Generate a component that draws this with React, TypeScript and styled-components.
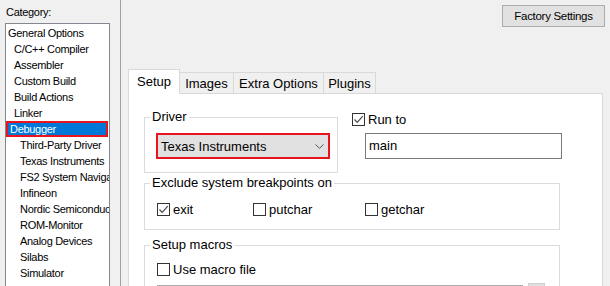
import React from 'react';
import styled, { createGlobalStyle } from 'styled-components';

const categories = [
  { label: 'General Options', level: 0 },
  { label: 'C/C++ Compiler', level: 1 },
  { label: 'Assembler', level: 1 },
  { label: 'Custom Build', level: 1 },
  { label: 'Build Actions', level: 1 },
  { label: 'Linker', level: 1 },
  { label: 'Debugger', level: 1, selected: true },
  { label: 'Third-Party Driver', level: 2 },
  { label: 'Texas Instruments', level: 2 },
  { label: 'FS2 System Navigator', level: 2 },
  { label: 'Infineon', level: 2 },
  { label: 'Nordic Semiconductor', level: 2 },
  { label: 'ROM-Monitor', level: 2 },
  { label: 'Analog Devices', level: 2 },
  { label: 'Silabs', level: 2 },
  { label: 'Simulator', level: 2 },
];

const tabs = [
  { label: 'Setup', width: 52, active: true },
  { label: 'Images', width: 55 },
  { label: 'Extra Options', width: 91 },
  { label: 'Plugins', width: 53 },
];

const CheckMark = () => (
  <svg width="11" height="11" viewBox="0 0 11 11" fill="none">
    <polyline points="1.5,5.5 4.2,8.3 9.8,2.2" stroke="#4a4a4a" strokeWidth="1.2" />
  </svg>
);

const CheckBox = ({ checked, label }: { checked?: boolean; label: string }) => (
  <CheckItem>
    <Box>{checked ? <CheckMark /> : null}</Box>
    <span>{label}</span>
  </CheckItem>
);

const App = () => {
  return (
    <Window>
      <GlobalStyle />
      <Sidebar>
        <CategoryLabel>Category:</CategoryLabel>
        <CategoryList>
          {categories.map((c) => (
            <CategoryItem key={c.label} $level={c.level} $selected={!!c.selected}>
              {c.label}
            </CategoryItem>
          ))}
        </CategoryList>
      </Sidebar>
      <Main>
        <TopBar>
          <FactoryButton>Factory Settings</FactoryButton>
        </TopBar>
        <TabStrip>
          {tabs.map((t) => (
            <Tab key={t.label} $width={t.width} $active={!!t.active}>
              {t.label}
            </Tab>
          ))}
        </TabStrip>
        <Panel>
          <DriverRow>
            <Group $width={194}>
              <Legend>Driver</Legend>
              <Combo>
                <span>Texas Instruments</span>
                <svg width="9" height="5" viewBox="0 0 9 5" fill="none">
                  <polyline points="0.5,0.5 4.5,4.3 8.5,0.5" stroke="#555" strokeWidth="1" />
                </svg>
              </Combo>
            </Group>
            <RunToColumn>
              <CheckBox checked label="Run to" />
              <TextField>main</TextField>
            </RunToColumn>
          </DriverRow>
          <Group $width={416} $gap={3}>
            <Legend>Exclude system breakpoints on</Legend>
            <BreakpointRow>
              <CheckBox checked label="exit" />
              <CheckBox label="putchar" />
              <CheckBox label="getchar" />
            </BreakpointRow>
          </Group>
          <Group $width={416} $gap={8}>
            <Legend>Setup macros</Legend>
            <MacroBody>
              <CheckBox label="Use macro file" />
              <FileRow>
                <FileField />
                <BrowseButton />
              </FileRow>
            </MacroBody>
          </Group>
        </Panel>
      </Main>
    </Window>
  );
};

const GlobalStyle = createGlobalStyle`
  html, body {
    margin: 0;
    padding: 0;
    background: #f0f0f0;
  }
  body {
    font-family: "Liberation Sans", Arial, sans-serif;
    color: #000;
  }
`;

const Window = styled.div`
  display: flex;
  width: 610px;
  height: 286px;
  overflow: hidden;
  background: #f0f0f0;
`;

const Sidebar = styled.div`
  display: flex;
  flex-direction: column;
  width: 120px;
  flex-shrink: 0;
  border-right: 1px solid #a0a0a0;
  font-size: 11px;
  letter-spacing: -0.3px;
`;

const CategoryLabel = styled.div`
  flex-shrink: 0;
  height: 18px;
  padding: 5px 6px 0;
  line-height: 14px;
`;

const CategoryList = styled.div`
  flex-shrink: 0;
  margin-left: 5px;
  width: 103px;
  min-height: 320px;
  padding-top: 1px;
  background: #fff;
  border: 1px solid #828790;
`;

const CategoryItem = styled.div<{ $level: number; $selected: boolean }>`
  height: 16px;
  line-height: 16px;
  box-sizing: border-box;
  white-space: nowrap;
  overflow: hidden;
  padding-left: ${(p) => (p.$selected ? 2 : 2 + p.$level * 6)}px;
  ${(p) =>
    p.$selected &&
    `
    width: 102px;
    line-height: 12px;
    background: #0078d7;
    color: #fff;
    border: 2px solid #e8141e;
  `}
`;

const Main = styled.div`
  display: flex;
  flex-direction: column;
  flex: 1;
  min-width: 0;
`;

const TopBar = styled.div`
  display: flex;
  justify-content: flex-end;
  padding: 5px 5px 0;
`;

const FactoryButton = styled.button`
  width: 103px;
  height: 22px;
  padding: 0;
  background: #e1e1e1;
  border: 1px solid #adadad;
  font-family: "Liberation Sans", Arial, sans-serif;
  font-size: 11.5px;
  letter-spacing: -0.3px;
  color: #000;
`;

const TabStrip = styled.div`
  display: flex;
  align-items: flex-end;
  height: 25px;
  margin: 42px 0 -1px 7px;
  position: relative;
  z-index: 1;
  font-size: 13px;
`;

const Tab = styled.div<{ $width: number; $active: boolean }>`
  display: flex;
  align-items: center;
  justify-content: center;
  box-sizing: border-box;
  width: ${(p) => p.$width}px;
  height: ${(p) => (p.$active ? 25 : 22)}px;
  padding-bottom: ${(p) => (p.$active ? 1 : 0)}px;
  margin-left: -1px;
  background: ${(p) => (p.$active ? '#fff' : '#f0f0f0')};
  border: 1px solid #d9d9d9;
  border-bottom: ${(p) => (p.$active ? 'none' : '1px solid #d9d9d9')};

  &:first-child {
    margin-left: 0;
  }
`;

const Panel = styled.div`
  flex: 1;
  margin: 0 7px 0 7px;
  padding: 16px 15px 0;
  background: #fff;
  border: 1px solid #d9d9d9;
  font-size: 13px;
`;

const DriverRow = styled.div`
  display: flex;
  gap: 14px;
`;

const Group = styled.fieldset<{ $width: number; $gap?: number }>`
  box-sizing: border-box;
  width: ${(p) => p.$width}px;
  margin: ${(p) => p.$gap || 0}px 0 0;
  padding: 9px 12px 13px;
  border: 1px solid #dcdcdc;
  min-width: 0;
`;

const Legend = styled.legend`
  margin-left: -7px;
  padding: 0 2px;
  line-height: 14px;
  font-size: 13px;
`;

const Combo = styled.div`
  display: flex;
  align-items: center;
  justify-content: space-between;
  box-sizing: border-box;
  width: 174px;
  height: 26px;
  margin-left: -1px;
  padding: 0 4px 0 3px;
  background: #e1e1e1;
  border: 2px solid #e8141e;
`;

const RunToColumn = styled.div`
  display: flex;
  flex-direction: column;
  padding-top: 3px;
`;

const CheckItem = styled.label`
  display: flex;
  align-items: center;
  gap: 3px;
  height: 13px;
  line-height: 13px;
  white-space: nowrap;
`;

const Box = styled.span`
  display: flex;
  align-items: center;
  justify-content: center;
  box-sizing: border-box;
  width: 13px;
  height: 13px;
  background: #fff;
  border: 1px solid #333;
`;

const TextField = styled.div`
  box-sizing: border-box;
  width: 197px;
  height: 26px;
  margin: 7px 0 0 13px;
  padding-left: 3px;
  line-height: 24px;
  border: 1px solid #7a7a7a;
`;

const BreakpointRow = styled.div`
  display: grid;
  grid-template-columns: 96px 112px auto;
  padding-top: 4px;
`;

const MacroBody = styled.div`
  padding-top: 2px;
`;

const FileRow = styled.div`
  display: flex;
  align-items: flex-start;
  gap: 5px;
  margin-top: 7px;
`;

const FileField = styled.div`
  box-sizing: border-box;
  width: 366px;
  height: 24px;
  margin-top: 2px;
  border: 1px solid #adadad;
`;

const BrowseButton = styled.div`
  width: 17px;
  height: 24px;
  background: #e1e1e1;
  border: 1px solid #d0d0d0;
  box-sizing: border-box;
`;

export default App;
